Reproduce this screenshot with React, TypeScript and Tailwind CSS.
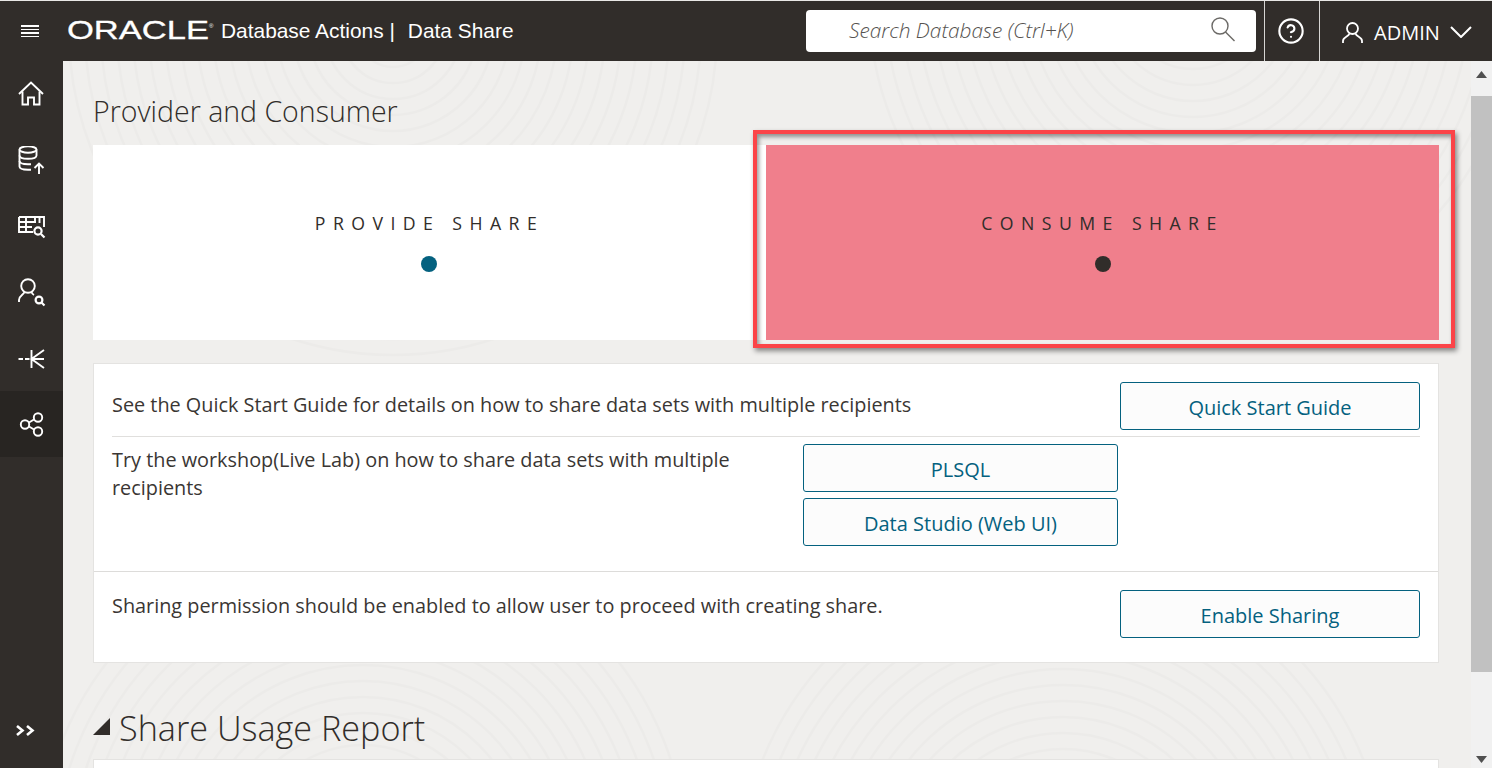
import { CircleHelp } from "lucide-react"

const navIcons = [
  {
    name: "home",
    draw: (
      <>
        <path d="M2 14 L14 2.5 L26 14" />
        <path d="M5.5 11.5 V24.5 H11 V17.5 H17 V24.5 H22.5 V11.5" />
      </>
    ),
  },
  {
    name: "load",
    draw: (
      <>
        <ellipse cx="11" cy="3.5" rx="8.5" ry="3.2" />
        <path d="M2.5 3.5 V20.5 C2.5 22.5 6 23.7 11 23.7 H14" />
        <path d="M2.5 9.5 C2.5 11.5 6 12.8 11 12.8 C16 12.8 19.5 11.5 19.5 9.5 V3.5" />
        <path d="M2.5 15 C2.5 17 6 18.2 11 18.2 H14" />
        <path d="M22 28 V17.5 M17.5 22 L22 17.5 L26.5 22" />
      </>
    ),
  },
  {
    name: "catalog",
    draw: (
      <>
        <path d="M2 5 H27 V15 M2 5 V20 H16 M2 10 H19 M2 15 H15 M9 5 V20 M18 5 V11 M22.5 5 V11" />
        <circle cx="21" cy="19" r="3.6" strokeWidth="2.2" />
        <path d="M24 22 L27.5 25.5" strokeWidth="2.2" />
      </>
    ),
  },
  {
    name: "users",
    draw: (
      <>
        <circle cx="11" cy="8" r="6.8" />
        <path d="M7.5 14 C6.5 17 2.5 17 2 22 V24 M14.5 14 C15 15.5 16 16.5 17 17" />
        <circle cx="22" cy="22" r="3.4" strokeWidth="2.2" />
        <path d="M24.5 24.5 L27.5 27.5" strokeWidth="2.2" />
      </>
    ),
  },
  {
    name: "model",
    draw: <path d="M1.5 15 H6 M8 15 H12.5 M14.5 15 H27 M14.5 6 V24 M27 6 L14.5 15 L27 24" />,
  },
  {
    name: "share",
    draw: (
      <>
        <circle cx="8" cy="14.5" r="4.2" />
        <circle cx="21" cy="7.5" r="4.2" />
        <circle cx="21" cy="21.5" r="4.2" />
        <path d="M12 12.5 L17 9.5 M12 16.5 L17 19.5" />
      </>
    ),
  },
]

function Sidebar() {
  return (
    <aside className="flex h-full w-[63px] shrink-0 flex-col bg-[#312d2a]">
      {navIcons.map((icon) => (
        <div
          key={icon.name}
          className={`flex h-[66px] items-center justify-center pt-[2px] ${icon.name === "share" ? "bg-[#282522]" : ""}`}
        >
          <svg viewBox="0 0 30 30" fill="none" stroke="#ffffff" strokeWidth="1.9" className="h-[30px] w-[30px]">
            {icon.draw}
          </svg>
        </div>
      ))}
      <div className="mt-auto flex h-[74px] items-center justify-center pb-[1px] pr-[12px]">
        <svg width="19" height="11" viewBox="0 0 19 11" fill="none" stroke="#ffffff" strokeWidth="2.6">
          <path d="M1 1 L6.5 5.5 L1 10 M11 1 L16.5 5.5 L11 10" />
        </svg>
      </div>
    </aside>
  )
}

function Topbar() {
  return (
    <header className="flex h-[61px] shrink-0 items-center border-t border-[#e9e8e6] bg-[#312d2a] text-white">
      <div className="flex w-[60px] flex-col items-center gap-[2px]">
        <span className="h-[1.5px] w-[18px] bg-white" />
        <span className="h-[1.5px] w-[18px] bg-white" />
        <span className="h-[1.5px] w-[18px] bg-white" />
        <span className="h-[1.5px] w-[18px] bg-white" />
      </div>
      <svg width="150" height="26" className="ml-[7px] mt-[-1px] shrink-0 overflow-visible">
        <text
          x="0"
          y="21"
          textLength="142"
          lengthAdjust="spacingAndGlyphs"
          fill="#ffffff"
          stroke="#ffffff"
          strokeWidth="0.3"
          fontFamily="Liberation Sans, sans-serif"
          fontSize="26"
        >
          ORACLE
        </text>
        <text x="142" y="10" fill="#ffffff" fontFamily="Liberation Sans, sans-serif" fontSize="6">
          ®
        </text>
      </svg>
      <div className="ml-[4px] flex items-center font-['Liberation_Sans',sans-serif] text-[20.9px] whitespace-nowrap">
        <span>Database Actions |</span>
        <span className="ml-[13px]">Data Share</span>
      </div>
      <div className="ml-auto flex h-full items-center">
        <div className="mr-[8px] flex h-[42px] w-[450px] items-center rounded-[4px] bg-white pl-[43px] pr-[20px]">
          <span className="font-['Open_Sans',sans-serif] text-[20.85px] font-light text-[#55524f] italic">Search Database (Ctrl+K)</span>
          <svg width="26" height="26" viewBox="0 0 26 26" fill="none" stroke="#6b6966" strokeWidth="1.4" className="mb-[4px] ml-auto">
            <circle cx="10" cy="10" r="8" />
            <path d="M15.5 16 L24.5 25" />
          </svg>
        </div>
        <div className="flex h-full w-[55px] items-center justify-center border-l border-[#d6d5d3] pr-[2px]">
          <CircleHelp size={28} strokeWidth={1.8} />
        </div>
        <div className="flex h-full w-[173px] items-center border-l border-[#d6d5d3] pl-[22px] font-['Open_Sans',sans-serif] text-[20px]">
          <svg viewBox="0 0 21 21" fill="none" stroke="#ffffff" strokeWidth="1.8" className="mt-[2px] h-[21px] w-[21px]">
            <circle cx="10.5" cy="6.5" r="5.5" />
            <path d="M7.5 11.5 C6.5 15 1 15 1 19 V21 M13.5 11.5 C14.5 15 20 15 20 19 V21" />
          </svg>
          <span className="ml-[11px] pt-[3px]">ADMIN</span>
          <svg width="22" height="12" viewBox="0 0 22 12" fill="none" stroke="#ffffff" strokeWidth="2" className="ml-[10px] mt-[2px]">
            <path d="M1 1 L11 11 L21 1" />
          </svg>
        </div>
      </div>
    </header>
  )
}

function OutlineButton({ label, className }: { label: string; className: string }) {
  return (
    <button className={`h-[48px] rounded-[3px] border border-[#04617f] bg-[#fcfcfc] pt-[4px] text-[20px] text-[#04617f] ${className}`}>
      {label}
    </button>
  )
}

const rings = [20, 36, 52, 68, 84, 100, 116, 132, 148, 164, 180, 196, 212, 228, 244, 260, 276, 292, 308, 324]

function Background() {
  // faint fingerprint-like swirls of the page background
  return (
    <svg className="pointer-events-none absolute inset-0 h-full w-full" fill="none" stroke="#ecebe9" strokeWidth="2.5">
      {rings.map((r) => (
        <g key={r}>
          <circle cx="330" cy="-30" r={r} />
          <circle cx="1130" cy="-60" r={r} />
          <circle cx="300" cy="800" r={r} />
          <circle cx="1000" cy="820" r={r} />
        </g>
      ))}
    </svg>
  )
}

export default function App() {
  return (
    <div className="flex h-[768px] w-[1492px] flex-col overflow-hidden bg-[#f0efed] font-['Open_Sans',sans-serif] text-[#312d2a]">
      <Topbar />
      <div className="flex min-h-0 flex-1">
        <Sidebar />
        <main className="relative min-w-0 flex-1 overflow-hidden pl-[30px] pr-[32px]">
          <Background />
          <div className="relative">
            <h1 className="mt-[30px] h-[54px] text-[28.5px] leading-[40px] font-light">Provider and Consumer</h1>
            <div className="flex h-[195px]">
              <div className="flex w-[673px] flex-col items-center bg-white pt-[65px]">
                <span className="text-[17.7px] leading-[26px] tracking-[0.42em]">PROVIDE SHARE</span>
                <span className="ml-[-1px] mt-[20px] h-[16px] w-[16px] rounded-full bg-[#04617f]" />
              </div>
              <div className="flex flex-1 flex-col items-center bg-[#f07f8c] pt-[65px]">
                <span className="text-[17.7px] leading-[26px] tracking-[0.42em]">CONSUME SHARE</span>
                <span className="mt-[20px] h-[16px] w-[16px] rounded-full bg-[#312d2a]" />
              </div>
            </div>

            <section className="mt-[23px] h-[300px] border border-[#e4e3e1] bg-white text-[19.85px] leading-[28px] text-[#3a3633]">
              <div className="mx-[18px] flex h-[73px] items-start border-b border-[#e0dfdd] pt-[18px]">
                <p className="mt-[9px] flex-1">See the Quick Start Guide for details on how to share data sets with multiple recipients</p>
                <OutlineButton label="Quick Start Guide" className="w-[300px]" />
              </div>
              <div className="flex h-[135px] items-start border-b border-[#dddcda] pl-[18px] pt-[7px]">
                <p className="mt-[2px] w-[680px]">Try the workshop(Live Lab) on how to share data sets with multiple recipients</p>
                <div className="ml-[11px] flex w-[315px] flex-col gap-[6px]">
                  <OutlineButton label="PLSQL" className="w-full" />
                  <OutlineButton label="Data Studio (Web UI)" className="w-full" />
                </div>
              </div>
              <div className="mx-[18px] flex items-start pt-[18px]">
                <p className="mt-[2px] flex-1">Sharing permission should be enabled to allow user to proceed with creating share.</p>
                <OutlineButton label="Enable Sharing" className="w-[300px]" />
              </div>
            </section>

            <h2 className="mt-[40px] flex h-[50px] items-center text-[34.2px] font-light">
              <svg width="17" height="17" viewBox="0 0 17 17" className="mr-[9px] mb-[4px]">
                <path d="M17 0 V17 H0 Z" fill="#312d2a" />
              </svg>
              Share Usage Report
            </h2>
            <div className="mt-[6px] h-[20px] border border-[#e4e3e1] bg-white" />
          </div>

          {/* annotation drawn over the screenshot */}
          <div className="absolute left-[690px] top-[69px] h-[218px] w-[702px] border-[4px] border-[#fb4448] shadow-[2px_3px_5px_rgba(0,0,0,0.45),inset_2px_3px_4px_rgba(0,0,0,0.4)]" />
        </main>
        <div className="flex w-[21px] shrink-0 flex-col items-center bg-[#f1f1f1]">
          <svg width="11" height="7" viewBox="0 0 11 7" className="mt-[10px]">
            <path d="M5.5 0 L11 7 H0 Z" fill="#505050" />
          </svg>
          <div className="mt-[18px] h-[576px] w-full bg-[#c1c1c1]" />
          <svg width="11" height="7" viewBox="0 0 11 7" className="mt-[84px]">
            <path d="M0 0 H11 L5.5 7 Z" fill="#505050" />
          </svg>
        </div>
      </div>
    </div>
  )
}
